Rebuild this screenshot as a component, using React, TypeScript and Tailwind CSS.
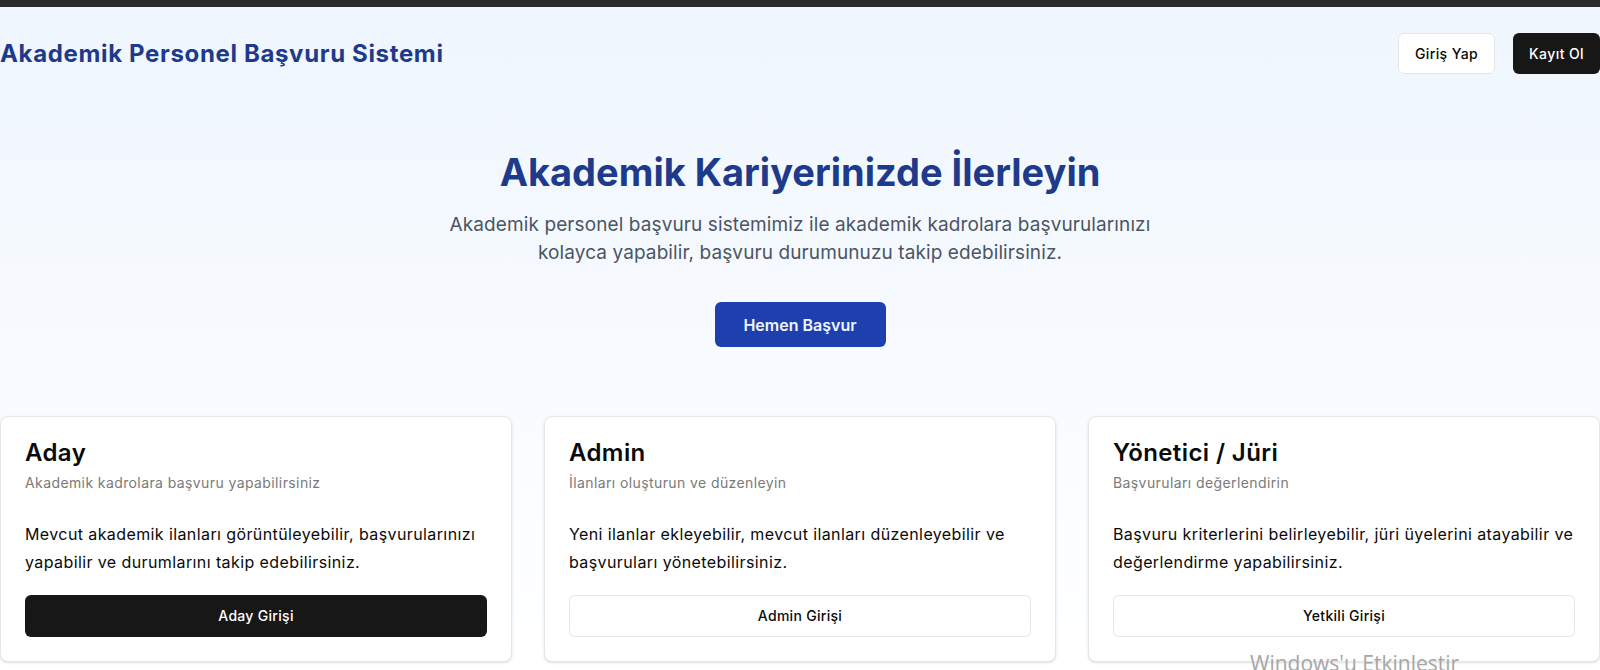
import React from 'react'

interface RoleCard {
    title: string
    subtitle: string
    body: string
    action: string
    primary?: boolean
}

const cards: RoleCard[] = [
    {
        title: 'Aday',
        subtitle: 'Akademik kadrolara başvuru yapabilirsiniz',
        body: 'Mevcut akademik ilanları görüntüleyebilir, başvurularınızı yapabilir ve durumlarını takip edebilirsiniz.',
        action: 'Aday Girişi',
        primary: true
    },
    {
        title: 'Admin',
        subtitle: 'İlanları oluşturun ve düzenleyin',
        body: 'Yeni ilanlar ekleyebilir, mevcut ilanları düzenleyebilir ve başvuruları yönetebilirsiniz.',
        action: 'Admin Girişi'
    },
    {
        title: 'Yönetici / Jüri',
        subtitle: 'Başvuruları değerlendirin',
        body: 'Başvuru kriterlerini belirleyebilir, jüri üyelerini atayabilir ve değerlendirme yapabilirsiniz.',
        action: 'Yetkili Girişi'
    }
]

const Card = ({ title, subtitle, body, action, primary = false }: RoleCard): JSX.Element => {
    return (
        <div className="rounded-lg border border-[#e5e7eb] bg-white shadow-sm p-6 flex flex-col">
            <h3 className="text-2xl font-semibold leading-none tracking-[0.4px] text-[#0a0a0a]">
                {title}
            </h3>
            <p className="mt-2 text-sm tracking-[0.4px] text-[#7a7a7a]">{subtitle}</p>
            <p className="mt-[27px] text-base leading-7 tracking-[0.4px] text-[#0a0a0a]">{body}</p>
            <button
                className={`mt-[19px] h-[42px] w-full rounded-md text-sm font-medium tracking-[0.3px] ${
                    primary
                        ? 'bg-[#171717] text-white'
                        : 'bg-white text-[#0a0a0a] border border-[#e5e5e5]'
                }`}
            >
                {action}
            </button>
        </div>
    )
}

export default function App(): JSX.Element {
    return (
        <div className="relative min-h-screen overflow-hidden bg-gradient-to-b from-blue-50 to-white font-['Inter',sans-serif]">
            <div className="h-[7px] bg-[#2b2b2b]" />

            {/* header */}
            <header className="flex items-center justify-between pt-[26px]">
                <h1 className="text-2xl font-bold tracking-[0.65px] text-[#1e3a8a]">
                    Akademik Personel Başvuru Sistemi
                </h1>
                <div className="flex items-center gap-[18px]">
                    <button className="h-[41px] px-4 rounded-md border border-[#e5e5e5] bg-white text-sm font-medium tracking-[0.4px] text-[#0a0a0a]">
                        Giriş Yap
                    </button>
                    <button className="h-[41px] px-4 rounded-md bg-[#171717] text-sm font-medium tracking-[0.4px] text-white">
                        Kayıt Ol
                    </button>
                </div>
            </header>

            {/* hero */}
            <section className="pt-[78px] text-center">
                <h2 className="text-[38px] leading-10 font-bold text-[#1e3a8a]">
                    Akademik Kariyerinizde İlerleyin
                </h2>
                <p className="mt-[19px] mx-auto max-w-[720px] text-[19px] leading-7 tracking-[0.1px] text-[#4b5563]">
                    Akademik personel başvuru sistemimiz ile akademik kadrolara başvurularınızı
                    kolayca yapabilir, başvuru durumunuzu takip edebilirsiniz.
                </p>
                <button className="mt-[35px] h-[45px] w-[171px] rounded-md bg-[#1e40af] text-base font-semibold text-[#eff6ff]">
                    Hemen Başvur
                </button>
            </section>

            {/* roles */}
            <section className="mt-[69px] grid grid-cols-3 gap-8">
                {cards.map((c) => (
                    <Card key={c.title} {...c} />
                ))}
            </section>

            <div className="absolute left-[1250px] top-[648px] text-[21px] text-[#a6a6a6] font-['Open_Sans',sans-serif] pointer-events-none whitespace-nowrap">
                Windows'u Etkinleştir
            </div>
        </div>
    )
}
